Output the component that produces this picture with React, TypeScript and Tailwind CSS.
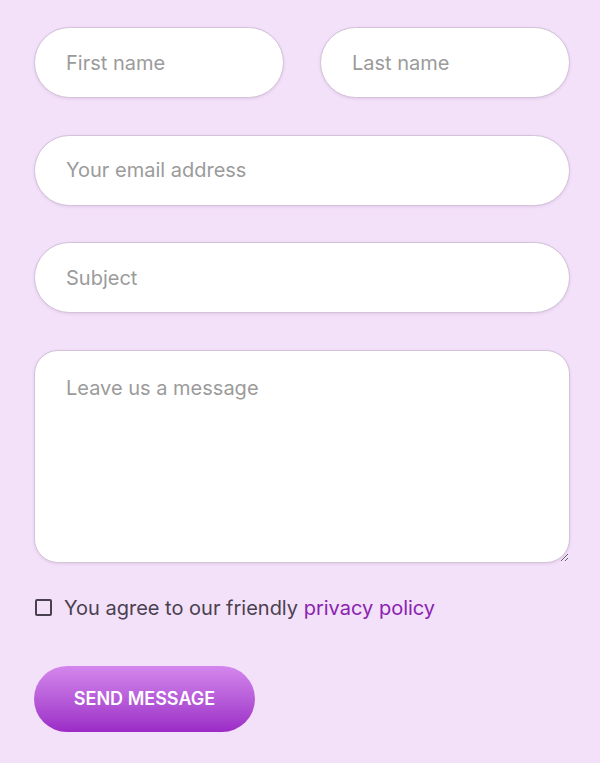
export default function App() {
  const input =
    "h-[71px] w-full rounded-full border border-[#d2c3d8] bg-white px-[31px] text-[20px] text-[#333] placeholder:text-[#9b9b9b] shadow-[0_1px_3px_rgba(120,80,140,0.15)] outline-none";
  return (
    <div className="min-h-[763px] w-[600px] bg-[#f3e0f9] pt-[27px] pl-[34px] pr-[30px] font-['Inter',sans-serif]">
      <div className="flex flex-col gap-[36.5px]">
        <div className="flex gap-[36px]">
          <input className={input} placeholder="First name" />
          <input className={input} placeholder="Last name" />
        </div>
        <input className={input} placeholder="Your email address" />
        <input className={input} placeholder="Subject" />
        <textarea
          className="h-[213px] w-full resize-y rounded-[24px] border border-[#d2c3d8] bg-white px-[31px] pt-[22px] text-[20px] text-[#333] placeholder:text-[#9b9b9b] shadow-[0_1px_3px_rgba(120,80,140,0.15)] outline-none"
          placeholder="Leave us a message"
        />
      </div>
      <label className="mt-[30px] flex h-[30px] items-center gap-[12px] text-[20px] text-[#4a4150]">
        <span className="ml-[1px] h-[17px] w-[17px] rounded-[2px] border-2 border-[#4a4150]" />
        <span>
          You agree to our friendly <span className="text-[#8a22b0]">privacy policy</span>
        </span>
      </label>
      <button className="mt-[43px] h-[66px] w-[221px] rounded-full bg-gradient-to-b from-[#d486ec] to-[#9b2ac6] text-[18px] font-semibold text-white">
        SEND MESSAGE
      </button>
    </div>
  );
}
